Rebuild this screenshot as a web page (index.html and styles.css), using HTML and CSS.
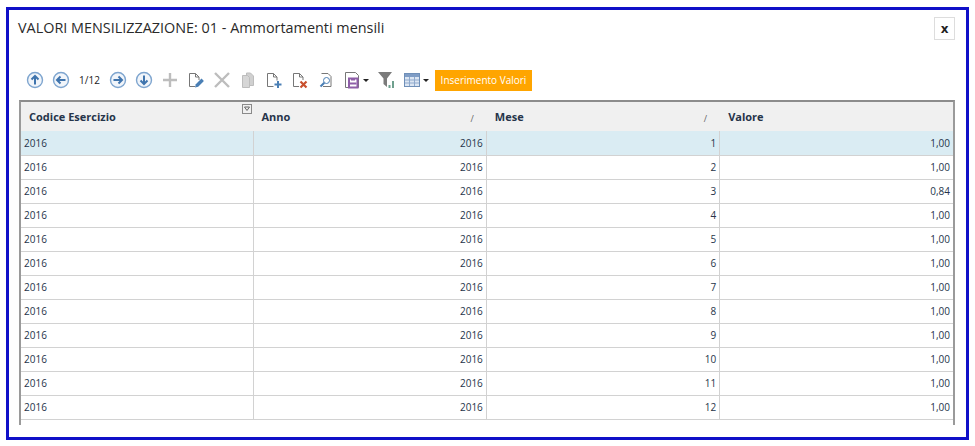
FILE: index.html
```html
<!DOCTYPE html>
<html lang="it">
<head>
  <meta charset="UTF-8">
  <title>Valori mensilizzazione</title>
  <link rel="stylesheet" href="styles.css">
</head>
<body>

  <div class="finestra">
    <header class="testata">
      <h1>VALORI MENSILIZZAZIONE: 01 - Ammortamenti mensili</h1>
      <button class="chiudi">x</button>
    </header>

    <div class="toolbar">
      <span class="ico"><svg width="18" height="18" viewBox="0 0 18 18"><circle cx="9" cy="9" r="7.500" class="cerchio"/><path d="M9 13.500V5.500M5.500 8.500L9 5l3.500 3.500" class="freccia"/></svg></span>
      <span class="ico"><svg width="18" height="18" viewBox="0 0 18 18"><circle cx="9" cy="9" r="7.500" class="cerchio"/><path d="M13.500 9H5.500M8.500 5.500L5 9l3.500 3.500" class="freccia"/></svg></span>
      <span class="pagina">1/12</span>
      <span class="ico"><svg width="18" height="18" viewBox="0 0 18 18"><circle cx="9" cy="9" r="7.500" class="cerchio"/><path d="M4.500 9h8M9.500 5.500L13 9l-3.500 3.500" class="freccia"/></svg></span>
      <span class="ico"><svg width="18" height="18" viewBox="0 0 18 18"><circle cx="9" cy="9" r="7.500" class="cerchio"/><path d="M9 4.500v8M5.500 9.500L9 13l3.500-3.500" class="freccia"/></svg></span>
      <span class="ico"><svg width="18" height="18" viewBox="0 0 18 18"><path d="M9 2v14M2 9h14" class="spento"/></svg></span>
      <span class="ico"><svg width="18" height="18" viewBox="0 0 18 18"><path d="M8 15.500H2.500V2.500h6l3.500 3.500v3M8.500 2.500V6H12" class="foglio"/><path d="M8 16.500l.8-3.200 5.700-5.700 2.400 2.400-5.700 5.700z" fill="#4a7fb5"/></svg></span>
      <span class="ico"><svg width="18" height="18" viewBox="0 0 18 18"><path d="M2 2l14 14M16 2L2 16" class="spento"/></svg></span>
      <span class="ico"><svg width="18" height="18" viewBox="0 0 18 18"><path d="M7.500 2h4l3 3v9.500h-7z" fill="#d0d0d0" stroke="#bdbdbd"/><path d="M3.500 4.500h5l2 2v10h-7z" fill="#d6d6d6" stroke="#bdbdbd"/></svg></span>
      <span class="ico"><svg width="18" height="18" viewBox="0 0 18 18"><path d="M8.500 15.500h-6V2.500h6l3.500 3.500v3.500M8.500 2.500V6H12" class="foglio"/><path d="M13 10v7M9.500 13.500h7" stroke="#4a7fb5" stroke-width="2" fill="none"/></svg></span>
      <span class="ico"><svg width="18" height="18" viewBox="0 0 18 18"><path d="M8 15.500H2.500V2.500h6l3.500 3.500v3M8.500 2.500V6H12" class="foglio"/><path d="M9.500 10.500l6 6M15.500 10.500l-6 6" stroke="#c9502e" stroke-width="2.200" fill="none"/></svg></span>
      <span class="ico"><svg width="18" height="18" viewBox="0 0 18 18"><path d="M4.500 2.500h6.500l3 3v10H6" class="foglio"/><circle cx="9.500" cy="9.500" r="3" fill="#fff" stroke="#4a7fb5"/><path d="M7.300 11.700L3.500 15.500" stroke="#4a7fb5" stroke-width="2"/></svg></span>
      <span class="ico ico-salva"><svg width="16" height="18" viewBox="0 0 16 18"><path d="M.5 16.500V1.500h10l3 3v12z" class="foglio"/><path d="M4 7.500h8.500v9H4z" fill="#fff" stroke="#8e5ea8" stroke-width="2"/><rect x="5" y="11.500" width="6.500" height="2" fill="#8e5ea8"/><rect x="6" y="7" width="4" height="2.500" fill="#8e5ea8"/></svg><i class="caret"></i></span>
      <span class="ico ico-filtro"><svg width="18" height="18" viewBox="0 0 18 18"><path d="M1 1h14L10 7.500V16L6.500 13V7.500z" fill="#7b7b7b"/><path d="M12.500 17v-3M16 17V10" stroke="#6fa08e" stroke-width="2"/></svg></span>
      <span class="ico ico-tabella"><svg width="18" height="18" viewBox="0 0 18 18"><rect x="1.500" y="2.500" width="15" height="13" fill="#dce6f3" stroke="#6f8fb8"/><rect x="2" y="3" width="14" height="3" fill="#7f9dc6"/><path d="M6.500 6v9M11.500 6v9M2 9h14M2 12h14" stroke="#8fa9cc" fill="none"/></svg><i class="caret"></i></span>
      <button class="btn-inserimento">Inserimento Valori</button>
    </div>

    <div class="griglia">
      <table>
        <thead>
          <tr>
            <th class="col-codice">Codice Esercizio<span class="filtro-col"><svg width="10" height="10" viewBox="0 0 10 10"><rect x=".5" y=".5" width="9" height="9" fill="none" stroke="#8a8a8a"/><path d="M2.500 3h5L5 6.500z" fill="none" stroke="#666"/></svg></span></th>
            <th>Anno<span class="ordina">/</span></th>
            <th>Mese<span class="ordina">/</span></th>
            <th>Valore</th>
          </tr>
        </thead>
        <tbody>
          <tr class="selezionata"><td>2016</td><td>2016</td><td>1</td><td>1,00</td></tr>
          <tr><td>2016</td><td>2016</td><td>2</td><td>1,00</td></tr>
          <tr><td>2016</td><td>2016</td><td>3</td><td>0,84</td></tr>
          <tr><td>2016</td><td>2016</td><td>4</td><td>1,00</td></tr>
          <tr><td>2016</td><td>2016</td><td>5</td><td>1,00</td></tr>
          <tr><td>2016</td><td>2016</td><td>6</td><td>1,00</td></tr>
          <tr><td>2016</td><td>2016</td><td>7</td><td>1,00</td></tr>
          <tr><td>2016</td><td>2016</td><td>8</td><td>1,00</td></tr>
          <tr><td>2016</td><td>2016</td><td>9</td><td>1,00</td></tr>
          <tr><td>2016</td><td>2016</td><td>10</td><td>1,00</td></tr>
          <tr><td>2016</td><td>2016</td><td>11</td><td>1,00</td></tr>
          <tr><td>2016</td><td>2016</td><td>12</td><td>1,00</td></tr>
        </tbody>
      </table>
    </div>
  </div>

</body>
</html>
```

FILE: styles.css
```css
* {
  box-sizing: border-box;
}

body {
  margin: 0;
  background: #fff;
  font-family: 'Open Sans', 'Liberation Sans', sans-serif;
  color: #26344a;
}

.finestra {
  width: 963px;
  height: 433px;
  margin: 7px 0 0 6px;
  padding: 0 11px 0 10px;
  border: 3px solid #1010c8;
}

.testata {
  display: flex;
  justify-content: space-between;
  height: 55px;
  padding: 7px 0 0 0;
}

.testata h1 {
  margin: 0 0 0 -1px;
  font-size: 14.400px;
  font-weight: 400;
  line-height: 22px;
  color: #2a2a2a;
}

.chiudi {
  width: 21px;
  height: 23px;
  padding: 0;
  border: 1px solid #ddd;
  background: #fff;
  font-family: 'DejaVu Sans', sans-serif;
  font-size: 12px;
  font-weight: bold;
  color: #222;
}

.toolbar {
  display: flex;
  align-items: center;
  height: 30px;
  padding: 0 0 0 3px;
}

.ico {
  display: flex;
  align-items: center;
  justify-content: center;
  width: 26px;
  height: 26px;
  flex: none;
}

.ico-salva {
  width: 32px;
  margin: 0 2px 0 2px;
  gap: 2px;
}

.ico-filtro {
  width: 22px;
  margin-left: 0;
}

.ico-tabella {
  width: 34px;
  margin-left: 2px;
  gap: 2px;
}

.caret {
  border: 3px solid transparent;
  border-top-color: #222;
  border-bottom: 0;
}

.pagina {
  width: 31px;
  font-size: 10px;
  text-align: center;
  color: #222;
}

.cerchio {
  fill: #f1f5fa;
  stroke: #7ea5cf;
  stroke-width: 1.400;
}

.freccia {
  fill: none;
  stroke: #3f74ad;
  stroke-width: 2;
}

.spento {
  fill: none;
  stroke: #bdbdbd;
  stroke-width: 2.400;
}

.foglio {
  fill: none;
  stroke: #777;
  stroke-width: 1;
}

.btn-inserimento {
  width: 97px;
  height: 21px;
  margin-left: 2px;
  padding: 0;
  border: none;
  background: #ffa500;
  color: #fff;
  font-family: inherit;
  font-size: 10px;
}

.griglia {
  height: 325px;
  margin-top: 5px;
  border-top: 2px solid #8c8c8c;
  border-left: 2px solid #9a9a9a;
  border-right: 2px solid #9a9a9a;
}

table {
  width: 100%;
  border-collapse: collapse;
  table-layout: fixed;
}

th, td {
  padding: 0 3px;
  border-right: 1px solid #d2d2d2;
  border-bottom: 1px solid #d2d2d2;
  font-size: 10px;
  height: 24px;
}

th:last-child, td:last-child {
  border-right: none;
}

th {
  position: relative;
  height: 29px;
  padding: 0 8px;
  background: #f0f0f0;
  border-right: 1px solid #f0f0f0;
  border-bottom: none;
  font-size: 11px;
  text-align: left;
}

.col-codice {
  width: 232px;
}

td {
  text-align: right;
}

td:first-child {
  text-align: left;
}

.selezionata td {
  background: #daecf3;
}

.filtro-col {
  position: absolute;
  top: 2px;
  right: 1px;
  line-height: 0;
}

.ordina {
  position: absolute;
  top: 10px;
  right: 12px;
  font-weight: 400;
  font-size: 9px;
  color: #666;
}
```
